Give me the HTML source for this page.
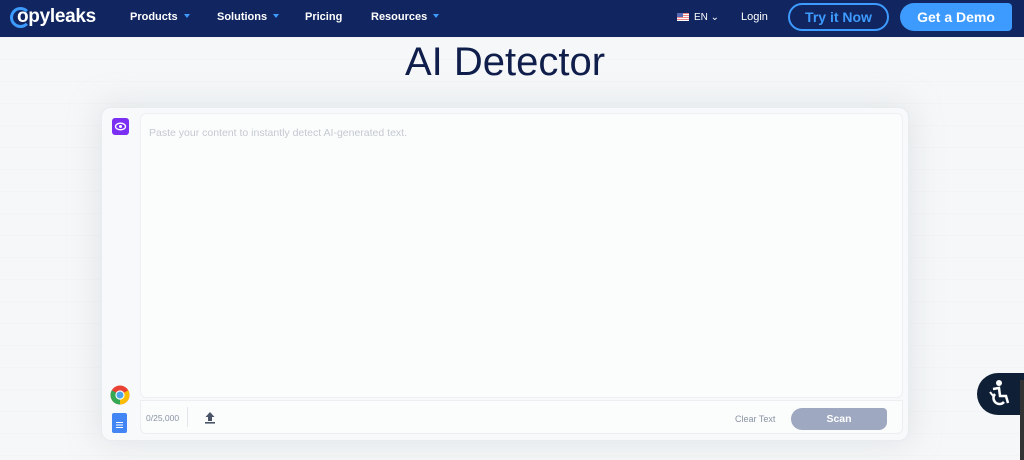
<!DOCTYPE html>
<html><head><meta charset="utf-8"><style>
*{margin:0;padding:0;box-sizing:border-box}
body{width:1024px;height:460px;overflow:hidden;background:#f5f7f8;font-family:"Liberation Sans",sans-serif;position:relative}
.nav{position:absolute;left:0;top:0;width:1024px;height:37px;background:#112660;color:#fff}
.nav .it{position:absolute;top:11px;font-size:11px;font-weight:bold}
.car{display:inline-block;width:0;height:0;border-left:3px solid transparent;border-right:3px solid transparent;border-top:4px solid #3d9bff;margin-left:6px;vertical-align:2px}
.bg{position:absolute;left:0;top:37px;width:1024px;height:423px;
background-image:linear-gradient(#eceef0 1px,transparent 1px);background-size:100% 22px;opacity:.35}
.card{position:absolute;left:101px;top:107px;width:808px;height:334px;background:#f7f9fa;border-radius:10px;border:1px solid #e8ecef;box-shadow:0 0 30px rgba(200,205,210,.5)}
.ta{position:absolute;left:140px;top:113px;width:763px;height:285px;background:#fbfdfd;border:1px solid #eef1f3;border-radius:6px}
.ft{position:absolute;left:140px;top:400px;width:763px;height:34px;background:#fbfdfd;border:1px solid #eceff2;border-radius:0 0 6px 6px}
</style></head><body>
<div class="bg"></div>
<div class="nav">
 <div style="position:absolute;left:10px;top:7px;width:21px;height:21px;border:3px solid #3d9bff;border-radius:50%;border-right-color:transparent"></div>
 <div style="position:absolute;left:17px;top:6px;font-size:19px;font-weight:bold;letter-spacing:-.3px">opyleaks</div>
 <div class="it" style="left:130px">Products<span class="car"></span></div>
 <div class="it" style="left:217px">Solutions<span class="car"></span></div>
 <div class="it" style="left:305px">Pricing</div>
 <div class="it" style="left:371px">Resources<span class="car"></span></div>
 <div style="position:absolute;left:677px;top:13px;width:12px;height:8px;background:repeating-linear-gradient(#e88 0 1px,#fff 1px 2px)"><div style="width:6px;height:4px;background:#5569b5"></div></div>
 <div class="it" style="left:694px;font-weight:normal;font-size:10px;top:12px">EN ⌄</div>
 <div class="it" style="left:741px;font-weight:normal">Login</div>
 <div style="position:absolute;left:788px;top:3px;width:101px;height:28px;border:2px solid #3d9bff;border-radius:14px;color:#3d9bff;font-weight:bold;font-size:14px;text-align:center;line-height:24px">Try it Now</div>
 <div style="position:absolute;left:900px;top:3px;width:112px;height:28px;background:#3d9bff;border-radius:14px 4px 4px 14px;color:#fff;font-weight:bold;font-size:14px;text-align:center;line-height:28px">Get a Demo</div>
</div>
<div style="position:absolute;left:0;width:1010px;top:40px;text-align:center;font-size:40px;color:#101e4c">AI Detector</div>
<div class="card"></div>
<div class="ta"><div style="position:absolute;left:8px;top:13px;font-size:10.5px;color:#c4c9d1">Paste your content to instantly detect AI-generated text.</div></div>
<div class="ft">
 <div style="position:absolute;left:5px;top:12px;font-size:8.5px;color:#8a93a3">0/25,000</div>
 <div style="position:absolute;left:46px;top:6px;width:1px;height:20px;background:#e3e6ea"></div>
 <svg style="position:absolute;left:63px;top:10px" width="12" height="13" viewBox="0 0 12 13"><path d="M6 1L1.5 6H4V10H8V6H10.5Z" fill="#4a5468"/><rect x="1" y="11" width="10" height="1.6" fill="#4a5468"/></svg>
 <div style="position:absolute;left:594px;top:13px;font-size:9px;color:#8a93a3">Clear Text</div>
 <div style="position:absolute;left:650px;top:7px;width:96px;height:22px;background:#9ea8c0;border-radius:11px 4px 8px 11px;color:#fff;font-weight:bold;font-size:10.5px;text-align:center;line-height:22px">Scan</div>
</div>
<div style="position:absolute;left:112px;top:118px;width:17px;height:17px;background:#7b2ff2;border-radius:3px"><svg width="17" height="17" viewBox="0 0 17 17"><ellipse cx="8.5" cy="8.5" rx="5" ry="3.3" fill="none" stroke="#fff" stroke-width="1.3"/><circle cx="8.5" cy="8.5" r="1.5" fill="#fff"/></svg></div>
<svg style="position:absolute;left:110px;top:385px" width="20" height="20" viewBox="0 0 20 20"><circle cx="10" cy="10" r="9.5" fill="#e94235"/><path d="M10 10L18.2 5.3A9.5 9.5 0 0 1 10 19.5Z" fill="#fbbc04"/><path d="M10 10L10 19.5A9.5 9.5 0 0 1 1.8 5.3Z" fill="#34a853"/><circle cx="10" cy="10" r="4.6" fill="#fff"/><circle cx="10" cy="10" r="3.5" fill="#4da3e8"/></svg>
<div style="position:absolute;left:112px;top:413px;width:15px;height:20px;background:#4285f4;border-radius:2px"><div style="position:absolute;left:4px;top:9px;width:7px;height:1px;background:#fff;box-shadow:0 2.5px #fff,0 5px #fff"></div></div>
<div style="position:absolute;left:977px;top:373px;width:47px;height:42px;background:#0f2036;border-radius:21px 0 0 21px"><svg style="position:absolute;left:9px;top:6px" width="26" height="30" viewBox="0 0 26 30"><circle cx="13" cy="4" r="3" fill="#fff"/><path d="M7 10L13 9L14 17L20 17L22 24" fill="none" stroke="#fff" stroke-width="2.5"/><path d="M9 15A6 6 0 1 0 18 23" fill="none" stroke="#fff" stroke-width="2.5"/><path d="M4 13L8 18" stroke="#fff" stroke-width="2"/></svg></div>
<div style="position:absolute;left:1020px;top:380px;width:4px;height:80px;background:#333"></div>
</body></html>
